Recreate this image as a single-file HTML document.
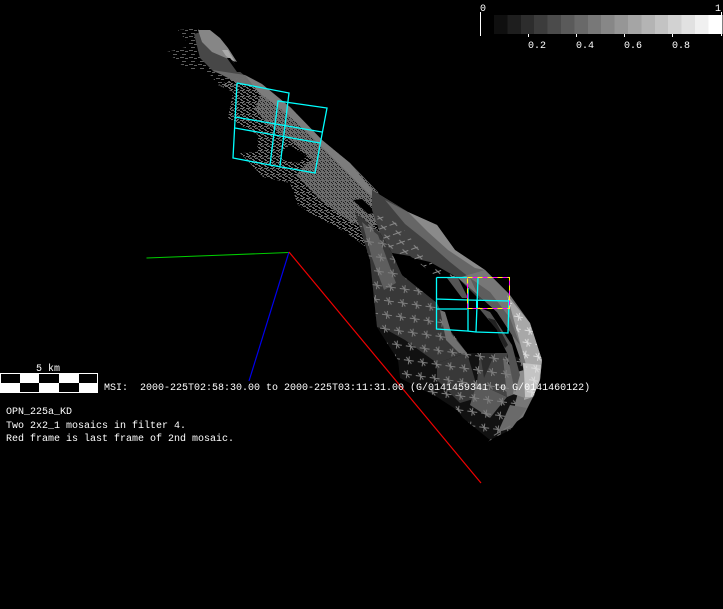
<!DOCTYPE html>
<html>
<head>
<meta charset="utf-8">
<style>
html,body{margin:0;padding:0;background:#000;width:723px;height:609px;overflow:hidden}
svg{display:block;position:absolute;left:0;top:0}
text{font-family:"Liberation Mono","DejaVu Sans Mono",monospace;font-size:10px;fill:#fff}
</style>
</head>
<body>
<svg width="723" height="609" viewBox="0 0 723 609" xmlns="http://www.w3.org/2000/svg">
<defs>
<pattern id="d2" width="4" height="4" patternUnits="userSpaceOnUse">
<rect width="4" height="4" fill="#6c6c6c"/><rect x="1" y="1" width="1" height="1" fill="#1c1c1c"/><rect x="3" y="2" width="1" height="1" fill="#1c1c1c"/><rect x="0" y="3" width="1" height="1" fill="#242424"/>
</pattern>
<pattern id="d3" width="6" height="6" patternUnits="userSpaceOnUse">
<path d="M0 .5H4M2 1.500H3M3 2.500H6M0 3.500H2M1 4.500H3M3 5.500H5M5 1V3" stroke="#6e6e6e" stroke-width="1" fill="none" shape-rendering="crispEdges"/>
</pattern>
<pattern id="d5" width="9" height="7" patternUnits="userSpaceOnUse">
<path d="M0 1.500H4M5 2.500H8M2 5.500H6" stroke="#5e5e5e" stroke-width="1" fill="none" shape-rendering="crispEdges"/>
</pattern>
<pattern id="t1" width="14" height="14" patternUnits="userSpaceOnUse" patternTransform="rotate(8)">
<path d="M2 6H12M7 2V10M4 3L10 9" stroke="#7e7e7e" stroke-width="1" fill="none"/>
</pattern>
<pattern id="t3" width="13" height="12" patternUnits="userSpaceOnUse" patternTransform="rotate(10)">
<path d="M2 6H11M7 2V10M4 3L10 9" stroke="#dcdcdc" stroke-width="1" fill="none"/>
</pattern>
<pattern id="t4" width="12" height="10" patternUnits="userSpaceOnUse" patternTransform="rotate(-20)">
<path d="M1 5H10M5 2L8 8" stroke="#8a8a8a" stroke-width="1" fill="none"/>
</pattern>
<pattern id="t5" width="11" height="9" patternUnits="userSpaceOnUse" patternTransform="rotate(-30)">
<path d="M1 3H9M4 5H8" stroke="#777" stroke-width="1" fill="none"/>
</pattern>
</defs>

<!-- upper tip -->
<polygon points="178,30 198,28 205,52 225,65 245,75 238,92 218,85 208,72 185,68 167,52 190,46" fill="url(#d5)"/>
<polygon points="194,34 208,30 228,52 238,70 245,76 232,76 214,72 200,58" fill="#474747"/>
<polygon points="198,30 210,30 220,38 228,48 237,62 226,58 212,52 202,42" fill="#868686"/>
<polygon points="222,50 228,50 235,62 226,56" fill="#aaa"/>
<polygon points="227,58 230,58 241,72 237,72" fill="#000"/>
<polygon points="212,70 245,75 258,86 240,84" fill="#6c6c6c"/>

<!-- mid body lace -->
<polygon points="218,85 233,92 228,118 258,135 257,152 240,153 263,177 290,183 298,205 310,213 347,233 370,250 382,240 372,205 345,170 322,140 290,107 262,87 245,75" fill="url(#d3)"/>
<polygon points="235,133 257,137 256,152 240,153" fill="#000"/>
<polygon points="262,90 290,107 322,140 350,163 378,192 384,215 372,228 350,222 320,200 296,175 305,165 312,160 290,140 268,125 255,110" fill="url(#d2)"/>
<polygon points="280,153 290,145 307,157 297,163 283,160" fill="#000"/>
<polygon points="245,75 262,84 290,107 322,140 350,163 372,190 408,212 398,214 368,193 338,163 308,133 282,110 258,92" fill="#7c7c7c"/>
<polygon points="353,200 362,199 377,213 368,214" fill="#000"/>

<!-- upper right band -->
<polygon points="372,190 408,212 437,225 455,250 485,270 510,295 480,300 458,278 430,262 392,253 380,233 372,210" fill="#414141"/>
<polygon points="385,200 408,212 437,225 455,250 485,270 510,295 500,297 470,278 450,262 425,240 405,224" fill="#666"/>
<polygon points="408,212 437,225 455,250 485,270 475,268 448,250 428,232" fill="#8a8a8a"/>
<polygon points="376,212 400,225 430,262 458,278 437,277 392,253 380,233" fill="url(#t4)"/>

<!-- lower body base -->
<polygon points="355,212 380,233 392,253 402,275 437,303 450,330 467,353 505,353 525,360 535,395 510,430 490,440 463,418 457,410 437,397 400,378 398,360 387,343 377,327 370,260" fill="#111"/>
<polygon points="355,212 380,233 392,253 402,275 437,303 450,330 467,353 437,363 405,340 387,330 377,327 370,260" fill="#383838"/>
<polygon points="362,222 378,235 396,283 384,290 372,258" fill="#5e5e5e"/>
<polygon points="437,363 467,353 480,397 460,403 437,380" fill="#383838"/>
<polygon points="480,353 507,353 507,397 477,383" fill="#444"/>
<polygon points="480,353 495,353 484,378" fill="#2b2b2b"/>
<polygon points="477,383 507,397 490,418 470,405" fill="#5a5a5a"/>
<polygon points="503,357 517,375 517,393 507,397" fill="#6a6a6a"/>
<polygon points="355,212 380,233 392,253 402,275 437,303 450,330 467,353 505,353 525,360 535,395 510,430 490,440 463,418 457,410 437,397 400,378 398,360 387,343 377,327 370,260" fill="url(#t1)"/>

<!-- right bright band -->
<polygon points="485,270 510,295 530,323 542,360 540,380 533,397 523,417 512,425 516,400 524,370 512,335 497,312 478,295 458,278" fill="#777"/>
<polygon points="470,278 490,292 510,318 520,345 512,335 497,312 478,295" fill="#5d5d5d"/>
<polygon points="507,295 530,323 542,360 540,380 533,397 524,400 526,365 518,335" fill="#a8a8a8"/>
<polygon points="523,363 541,365 539,382 533,397 525,397" fill="#c4c4c4"/>
<polygon points="507,295 530,323 542,360 540,380 533,397 524,400 526,365 518,335" fill="url(#t3)"/>
<polygon points="517,372 524,370 525,398 513,394" fill="#8e8e8e"/>
<polygon points="510,405 527,408 512,428 498,432" fill="#6a6a6a"/>
<polygon points="512,425 500,440 482,450 474,456 490,440 500,425" fill="url(#t5)"/>
<polygon points="478,307 490,312 512,345 520,375 515,392 507,353 497,333" fill="#535353"/>
<polygon points="488,318 495,320 508,345 505,348" fill="#222"/>

<!-- hole -->
<polygon points="392,253 410,256 437,277 458,278 468,298 478,307 497,330 503,353 467,353 450,330 437,303 402,275" fill="#000"/>
<polygon points="447,278 458,278 468,298 462,298" fill="#555"/>
<polygon points="440,310 445,312 452,335 467,353 459,353 446,340" fill="#707070"/>

<!-- axes -->
<line x1="146.500" y1="258" x2="289" y2="252.500" stroke="#0c0" stroke-width="1"/>
<line x1="289" y1="252" x2="249" y2="381" stroke="#00e" stroke-width="1.2"/>
<line x1="289" y1="252" x2="481" y2="483" stroke="#e00" stroke-width="1.2"/>

<!-- cyan frames -->
<g stroke="#0ff" stroke-width="1.300" fill="none">
<path d="M237 83L289 93L280 166"/>
<path d="M237 83L233 158L270 165L315 173L320 145L327 108L278 101L270 165"/>
<path d="M235 117L322 132"/>
<path d="M235 128L320 143"/>
<path d="M436.500 277.500H467M436.500 277.500V329L467 331L476 332L508 333L509 300"/>
<path d="M436 299L468 300L509 301"/>
<path d="M436 309L467 309"/>
<path d="M468 288V331"/>
<path d="M478 278L476 332"/>
<path d="M477 300V309" stroke-width="2"/>
</g>
<g fill="none" stroke-width="1" shape-rendering="crispEdges">
<rect x="467.500" y="277.500" width="42" height="31" stroke="#f0f"/>
<rect x="467.500" y="277.500" width="42" height="31" stroke="#ff0" stroke-dasharray="5 5"/>
</g>

<!-- colour bar -->
<g shape-rendering="crispEdges">
<rect x="494" y="15" width="14" height="19" fill="#0f0f0f"/>
<rect x="507.400" y="15" width="14" height="19" fill="#1e1e1e"/>
<rect x="520.800" y="15" width="14" height="19" fill="#2d2d2d"/>
<rect x="534.200" y="15" width="14" height="19" fill="#3c3c3c"/>
<rect x="547.600" y="15" width="14" height="19" fill="#4b4b4b"/>
<rect x="561" y="15" width="14" height="19" fill="#5a5a5a"/>
<rect x="574.400" y="15" width="14" height="19" fill="#696969"/>
<rect x="587.800" y="15" width="14" height="19" fill="#787878"/>
<rect x="601.200" y="15" width="14" height="19" fill="#878787"/>
<rect x="614.600" y="15" width="14" height="19" fill="#969696"/>
<rect x="628" y="15" width="14" height="19" fill="#a5a5a5"/>
<rect x="641.400" y="15" width="14" height="19" fill="#b4b4b4"/>
<rect x="654.800" y="15" width="14" height="19" fill="#c3c3c3"/>
<rect x="668.200" y="15" width="14" height="19" fill="#d2d2d2"/>
<rect x="681.600" y="15" width="14" height="19" fill="#e1e1e1"/>
<rect x="695" y="15" width="14" height="19" fill="#f0f0f0"/>
<rect x="708.400" y="15" width="14" height="19" fill="#fff"/>
<rect x="480" y="12" width="1" height="24" fill="#fff"/>
<rect x="721" y="12" width="1" height="24" fill="#fff"/>
<rect x="528" y="34" width="1" height="3" fill="#fff"/>
<rect x="576" y="34" width="1" height="3" fill="#fff"/>
<rect x="624" y="34" width="1" height="3" fill="#fff"/>
<rect x="672" y="34" width="1" height="3" fill="#fff"/>
</g>
<text x="480" y="11">0</text>
<text x="715" y="11">1</text>
<text x="528" y="48">0.2</text>
<text x="576" y="48">0.4</text>
<text x="624" y="48">0.6</text>
<text x="672" y="48">0.8</text>

<!-- scale bar -->
<g shape-rendering="crispEdges">
<rect x="0" y="373" width="98" height="20" fill="#fff"/>
<rect x="1" y="374" width="19" height="9" fill="#000"/>
<rect x="39" y="374" width="20" height="9" fill="#000"/>
<rect x="79" y="374" width="18" height="9" fill="#000"/>
<rect x="20" y="383" width="19" height="9" fill="#000"/>
<rect x="59" y="383" width="20" height="9" fill="#000"/>
</g>
<text x="36" y="371">5 km</text>
<text x="104" y="390" xml:space="preserve">MSI:  2000-225T02:58:30.00 to 2000-225T03:11:31.00 (G/0141459341 to G/0141460122)</text>
<text x="6" y="414">OPN_225a_KD</text>
<text x="6" y="428">Two 2x2_1 mosaics in filter 4.</text>
<text x="6" y="441">Red frame is last frame of 2nd mosaic.</text>
</svg>
</body>
</html>
